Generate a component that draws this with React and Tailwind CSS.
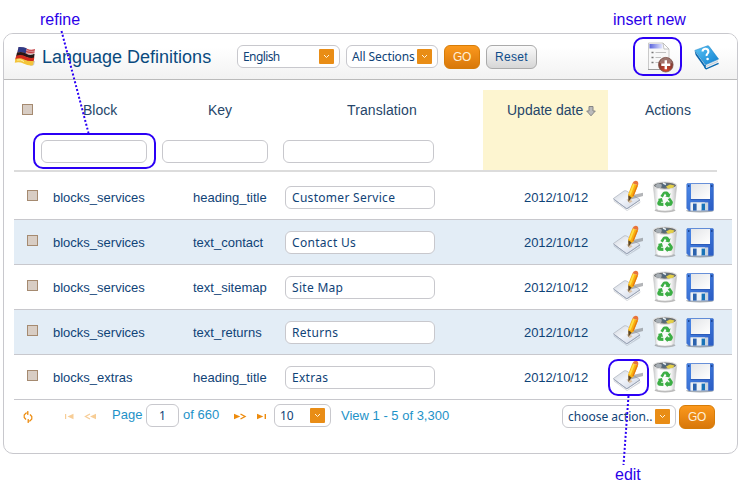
import React from "react";

const rows = [
  ["blocks_services", "heading_title", "Customer Service"],
  ["blocks_services", "text_contact", "Contact Us"],
  ["blocks_services", "text_sitemap", "Site Map"],
  ["blocks_services", "text_returns", "Returns"],
  ["blocks_extras", "heading_title", "Extras"],
];

const field = "h-[23px] shrink-0 rounded-[6px] border border-[#c8c8cd] bg-white";
const inputText = "font-['Noto_Sans',sans-serif] text-[12px] text-[#0f4377]";

function Gradients() {
  return (
    <svg width="0" height="0" className="absolute">
      <defs>
        <linearGradient id="plate" x1="0" y1="0" x2="1" y2="1">
          <stop offset="0" stopColor="#d0d4da" />
          <stop offset=".45" stopColor="#f1f4fa" />
          <stop offset="1" stopColor="#cbd3e2" />
        </linearGradient>
        <linearGradient id="bin" x1="0" y1="0" x2="1" y2="0">
          <stop offset="0" stopColor="#c6c8c9" />
          <stop offset=".22" stopColor="#ffffff" />
          <stop offset=".75" stopColor="#f6f6f6" />
          <stop offset="1" stopColor="#bdbebf" />
        </linearGradient>
        <linearGradient id="disk" x1="0" y1="0" x2="1" y2="1">
          <stop offset="0" stopColor="#4b89e8" />
          <stop offset="1" stopColor="#2a5cc4" />
        </linearGradient>
        <linearGradient id="label" x1="0" y1="0" x2="1" y2="1">
          <stop offset="0" stopColor="#e3e5e8" />
          <stop offset="1" stopColor="#ffffff" />
        </linearGradient>
        <linearGradient id="strip" x1="0" y1="0" x2="1" y2="0">
          <stop offset="0" stopColor="#5a64dc" />
          <stop offset="1" stopColor="#e4e7ff" />
        </linearGradient>
        <radialGradient id="plus" cx=".5" cy=".85" r=".75">
          <stop offset="0" stopColor="#d8442c" />
          <stop offset=".6" stopColor="#8f3a2f" />
          <stop offset="1" stopColor="#7a4a42" />
        </radialGradient>
        <linearGradient id="book" x1="0" y1="0" x2="1" y2="1">
          <stop offset="0" stopColor="#5cc4f5" />
          <stop offset="1" stopColor="#0f80d0" />
        </linearGradient>
      </defs>
    </svg>
  );
}

function EditIcon() {
  return (
    <svg width="34" height="32" viewBox="0 0 34 32" className="shrink-0">
      <path d="M1.5 20 L15 30.2 L28.5 21 L28 23 L15 31 L2 21.5Z" fill="#8c93a0" opacity=".4" />
      <path d="M1.3 18.6 L12 11 Q13.2 10.4 14.5 11 L28 19.6 L16 28.3 Q14.8 29 13.6 28.2 Z" fill="url(#plate)" stroke="#b3b9c4" strokeWidth=".8" />
      <path d="M1.6 19.2 L14.8 28.8 L28 20" fill="none" stroke="#98a2b5" strokeWidth="1" />
      <path d="M17 20 L23 14.5 L31 12.8 L31 16 L24 18Z" fill="#808389" opacity=".6" />
      <path d="M14.5 19.5 Q18 18 20.5 21.5 L17.5 23.2Z" fill="#d9b58a" opacity=".7" />
      <path d="M20.4 3.2 L26 5.2 L21.5 16.4 L17 20 L16.2 14.2Z" fill="#f9b010" />
      <path d="M22 3.8 L17.8 14.6" fill="none" stroke="#ffdf45" strokeWidth="1.8" />
      <path d="M25.3 5.2 L21 16" stroke="#e57a10" strokeWidth="1.4" />
      <path d="M20.4 3.2 Q22 -.2 25 1 Q27 2.4 26 5.2Z" fill="#e8743a" />
      <path d="M16.3 15.2 L19.6 17.6 L16.4 22Z" fill="#5a4526" />
    </svg>
  );
}

function BinIcon() {
  return (
    <svg width="26" height="32" viewBox="0 0 26 32" className="shrink-0">
      <ellipse cx="13" cy="29.2" rx="10.5" ry="2.2" fill="#777" opacity=".5" />
      <path d="M1.2 4.5 L3.8 27.5 Q5 30 13 30 Q21 30 22.2 27.5 L24.8 4.5Z" fill="url(#bin)" stroke="#c0c0c0" strokeWidth=".5" />
      <ellipse cx="13" cy="4.6" rx="11.6" ry="3.6" fill="#6a6e71" stroke="#dedede" strokeWidth="1.1" />
      <path d="M3 4.8 L6 2.2 L10 3.6 L9 7.3 L5 6.6Z" fill="#a7aeb4" />
      <path d="M9.5 3 L15 2 L16 5 L11 7.2Z" fill="#53697b" />
      <path d="M14 5.5 L18 3.5 L22.5 4.5 L21 6.7 L16 7.8Z" fill="#e3cf48" />
      <path d="M11 2 L14 3.5" stroke="#e8edf0" strokeWidth="1.4" />
      <g fill="#3cae45">
        <path d="M8.4 15 L11 11.2 Q11.6 10.4 12.8 10.4 L15 10.4 Q16 10.6 16.6 11.7 L17.4 13 L18.6 12.3 L17.4 16.6 L13.2 15.5 L14.4 14.8 L13 12.4 L10.8 16.4Z" />
        <path d="M18.1 16.8 L20.7 20.6 Q21.2 21.9 20.4 23 L19.3 24.7 L15.6 25 L15.6 26.3 L12.6 23.1 L15.6 19.8 L15.6 21.3 L18 21.2 L15.8 18.2Z" />
        <path d="M11.4 25 L7.2 24.8 Q5.8 24.4 5.3 23 Q5 22 5.6 21 L6.8 18.8 L5.7 18.1 L9.9 17 L11.1 21.1 L9.8 20.4 L8.9 21.8 L11.4 21.8Z" />
      </g>
    </svg>
  );
}

function DiskIcon() {
  return (
    <svg width="29" height="30" viewBox="0 0 29 30" className="shrink-0">
      <ellipse cx="14" cy="27.8" rx="14" ry="1.6" fill="#55606c" opacity=".5" />
      <path d="M1.5 .6 H26.5 Q27.4 .6 27.4 1.6 V26.8 Q27.4 27.6 26.5 27.6 H3 L.8 25.5 V1.6 Q.8 .6 1.5 .6Z" fill="url(#disk)" stroke="#3768c4" strokeWidth=".6" />
      <rect x="5" y="1" width="19" height="15" fill="url(#label)" />
      <path d="M4.5 16.5 H24.5" stroke="#2c5cba" strokeWidth="1" />
      <rect x="4.6" y="19.4" width="17.6" height="8.2" fill="#ccd5de" />
      <path d="M4.6 19.4 H19 L15 27.6 H4.6Z" fill="#edf1f4" />
      <rect x="7" y="20.6" width="3.6" height="7" fill="#2a62ae" />
      <rect x="15.6" y="20.6" width="3.4" height="6.6" fill="#1873b8" />
      <rect x="2" y="2" width="1.5" height="2" fill="#1f4796" />
      <rect x="25" y="2" width="1.5" height="2" fill="#1f4796" />
    </svg>
  );
}

function FlagIcon() {
  return (
    <svg width="23" height="22" viewBox="0 0 23 22" className="shrink-0">
      <path d="M3 15 Q10 14 17 20 L20 19 L21 15Z" fill="#777" opacity=".35" />
      <path d="M4.5 1 Q11 .5 15 3.5 Q18 4.5 21 3.3 L20 8 L2.8 8Z" fill="#dfa3a4" />
      <path d="M13 3.4 Q17 5 21 3.8 M12 5.6 Q16 7 20.6 6" stroke="#c43a40" strokeWidth="1.1" fill="none" />
      <path d="M4.5 1 Q9 .7 12.7 2.3 L11.7 7.5 Q7 5 3.4 6.6Z" fill="#2f3a86" />
      <path d="M3 6.6 Q8 4.8 12 7.5 Q16 9.8 20.6 7.7 L20 12.2 Q15 12.5 11 10.7 Q6 8.7 2 10.8Z" fill="#261616" />
      <path d="M2.2 9.8 Q7 8 11.5 10.5 Q16 12.6 20.3 11.5 L19.7 15.6 Q14 16 10 14 Q5 12 1 13.8Z" fill="#cf2a1c" />
      <path d="M1.3 13 Q6 11.4 10 13.4 Q15 15.8 19.8 14.8 L19 19.3 Q14 20 10 17.7 Q5 15.4 .8 16.8Z" fill="#f3c43a" />
      <path d="M3 14 Q7 13 10 15.5" stroke="#fff3a5" strokeWidth="1" fill="none" />
    </svg>
  );
}

function InsertIcon() {
  return (
    <svg width="28" height="31" viewBox="0 0 28 31">
      <path d="M1.5 1 H16 L22 7 V27.5 H1.5Z" fill="#f8f8f8" stroke="#cacaca" />
      <path d="M1 27.5 H22" stroke="#9a9a9a" strokeWidth="1.2" />
      <rect x="2.5" y="2" width="13" height="4.5" fill="url(#strip)" />
      <path d="M16 1 L17 7 L22 7Z" fill="#fff" stroke="#b5b5b5" strokeWidth=".8" />
      <path d="M4.5 10.5 H6.5 M4.5 15.5 H6.5 M4.5 20.5 H6.5" stroke="#777" strokeWidth="1.5" />
      <path d="M8.5 10.5 H19 M8.5 15.5 H14 M8.5 20.5 H12" stroke="#c0c0c0" strokeWidth="1.2" />
      <circle cx="18.8" cy="22.7" r="7.3" fill="url(#plus)" stroke="#7d5048" strokeWidth=".8" />
      <path d="M12.5 21 Q14 16 18.8 15.8 Q24 16 25.2 21 Q19 23 12.5 21Z" fill="#fff" opacity=".25" />
      <path d="M18.8 18.2 V27.2 M14.3 22.7 H23.3" stroke="#fff" strokeWidth="2.4" />
    </svg>
  );
}

function HelpBook() {
  return (
    <svg width="26" height="25" viewBox="0 0 26 25" className="shrink-0">
      <path d="M.6 5.8 L11 20.3 L11.6 24 L1.6 10Z" fill="#0a66ad" />
      <path d="M11.5 20 L24.2 14.5 L23.9 18.2 L12.5 23.2Z" fill="#e9edf1" />
      <path d="M12 21.5 L24 16.3" stroke="#abb8c5" strokeWidth=".6" />
      <path d="M.8 5.4 L13.5 .8 Q14.5 .6 15.2 1.5 L24.6 14.1 L11.5 19.8Z" fill="url(#book)" stroke="#0f7cc4" strokeWidth=".5" />
      <path d="M11.3 20 Q10.2 23 12.3 23.9 L24.6 18.3" fill="none" stroke="#0a6ab0" strokeWidth="1.3" />
      <path d="M8.6 6.6 Q8.6 4.2 11.1 3.8 Q13.9 3.6 14.4 6.2 Q14.6 8 13.2 9 Q12.4 9.7 12.7 11" fill="none" stroke="#fff" strokeWidth="2.1" />
      <circle cx="13.6" cy="14" r="1.3" fill="#fff" />
    </svg>
  );
}

function Check() {
  return <span className="block size-[11px] shrink-0 border border-[#a58a70] bg-[#d8cdc4]" />;
}

function Select({ width, children, track = "" }) {
  return (
    <div className={`flex items-center justify-between pr-[5px] pl-[5px] ${field} ${width}`}>
      <span className={`whitespace-pre ${inputText} ${track}`}>{children}</span>
      <span className="flex size-[15px] shrink-0 items-center justify-center rounded-[1px] bg-[#e98d16]">
        <svg width="7" height="5" viewBox="0 0 7 5">
          <path d="M1 1 L3.5 3.5 L6 1" fill="none" stroke="#fff3dc" strokeWidth="1" />
        </svg>
      </span>
    </div>
  );
}

function Go() {
  return (
    <button className="h-[24px] w-[36px] shrink-0 rounded-[6px] border border-[#d67c08] bg-linear-to-b from-[#fb981c] to-[#d8780a] text-[12px] leading-[22px] tracking-[-0.4px] text-[#fff0d8]">
      GO
    </button>
  );
}

function Highlight({ place }) {
  return <div className={`pointer-events-none absolute rounded-[10px] border-2 border-[#2b00f5] ${place}`} />;
}

function Note({ place, children }) {
  return <div className={`absolute whitespace-nowrap text-[16px] leading-[18px] text-[#2b00e8] ${place}`}>{children}</div>;
}

export default function App() {
  return (
    <div className="relative h-[484px] w-[740px] overflow-hidden bg-white pt-[33px] pl-[3px] font-['Liberation_Sans',Arial,sans-serif]">
      <Gradients />
      <main className="h-[421px] w-[735px] overflow-hidden rounded-[10px] border border-[#c8c8cd] bg-white">
        <header className="flex h-[46px] items-start border-b border-[#bbb] bg-linear-to-b from-white from-30% to-[#f2f2f2] pl-[10px]">
          <div className="mt-[12px]"><FlagIcon /></div>
          <h1 className="mt-[12px] ml-[5px] w-[195px] text-[18px] leading-[22px] whitespace-nowrap text-[#0a4a7e]">Language Definitions</h1>
          <div className="mt-[11px] flex items-start gap-[6px]">
            <Select width="w-[103px]" track="tracking-[-0.6px]">English</Select>
            <Select width="w-[92px]" track="tracking-[-0.1px]">All Sections</Select>
            <Go />
            <button className="h-[24px] w-[51px] rounded-[6px] border border-[#aaa] bg-linear-to-b from-[#fafafa] to-[#d6d6d6] text-[12px] leading-[22px] tracking-[0.3px] text-[#0f4c8a]">Reset</button>
          </div>
          <div className="mt-[8px] ml-[110px]"><InsertIcon /></div>
          <div className="mt-[11px] ml-[19px]"><HelpBook /></div>
        </header>

        <section className="pt-[10px] pl-[10px]">
          <div className="flex h-[82px] w-[703px] border-b-2 border-[#dcdcdc] text-[14px] leading-[16px] text-[#26466a]">
            <div className="w-[148px]">
              <div className="flex h-[50px] items-start pt-[12px] pl-[8px]">
                <div className="mt-[2px] mr-[50px]"><Check /></div>
                Block
              </div>
              <input className={`block ml-[27px] w-[106px] ${field}`} />
            </div>
            <div className="w-[121px]">
              <div className="h-[50px] pt-[12px] pl-[46px]">Key</div>
              <input className={`block w-[106px] ${field}`} />
            </div>
            <div className="w-[200px]">
              <div className="h-[50px] pt-[12px] pl-[64px] tracking-[0.1px]">Translation</div>
              <input className={`block w-[151px] ${field}`} />
            </div>
            <div className="flex h-[80px] w-[125px] items-start bg-[#fdf5d0] pt-[12px] pl-[24px]">
              <span className="w-[79px] whitespace-nowrap">Update date</span>
              <svg width="10" height="11" viewBox="0 0 10 11" className="mt-[4px]">
                <path d="M3 .5 H7 V5 H9.3 L5 9.8 L.7 5 H3Z" fill="#bbb" stroke="#858585" />
              </svg>
            </div>
            <div className="pt-[12px] pl-[37px]">Actions</div>
          </div>

          <div className="pt-[3px]">
            {rows.map(([block, key, value], i) => (
              <div key={i} className={`flex h-[45px] w-[718px] items-center border-b border-[#c8c8cd] text-[13px] text-[#0f4377] ${i % 2 ? "bg-[#e3edf6]" : ""}`}>
                <div className="-mt-[3px] w-[39px] pl-[13px]"><Check /></div>
                <div className="w-[140px] pt-[2px]">{block}</div>
                <div className="w-[92px] pt-[2px]">{key}</div>
                <div className={`mt-px flex w-[150px] items-center pl-[6px] tracking-[0.3px] ${field} ${inputText}`}>{value}</div>
                <div className="w-[89px] shrink-0" />
                <div className="w-[88px] pt-[2px] tracking-[-0.1px]">2012/10/12</div>
                <div className="-mt-[2px] flex items-start">
                  <EditIcon />
                  <div className="ml-[6px] mt-px"><BinIcon /></div>
                  <div className="ml-[8px] mt-[3px]"><DiskIcon /></div>
                </div>
              </div>
            ))}
          </div>

          <footer className="flex items-start pt-[4px] text-[13px] leading-[22px] whitespace-nowrap text-[#1e92c8]">
            <svg width="10" height="12" viewBox="0 0 10 12" className="mt-[7px] ml-[9px] shrink-0" fill="none" stroke="#ed8b0d" strokeWidth="1.2">
              <path d="M5.5 2 H3 L1.2 4 V6.5 L3 8.5 M4.8 0 V4 M4.5 10 H7 L8.8 8 V5.5 L7 3.5 M5.2 8 V12" />
            </svg>
            <svg width="33" height="7" viewBox="0 0 33 7" className="mt-[9px] ml-[31px] shrink-0" fill="#f7cd96">
              <path d="M1 1 H2.2 V6 H1Z M9.5 .8 V6.2 L3.5 3.5Z M32 .8 V6.2 L26 3.5Z" />
              <path d="M26 1 L21.5 3.5 L26 6" fill="none" stroke="#f7cd96" strokeWidth="1.3" />
            </svg>
            <span className="ml-[15px] w-[34px]">Page</span>
            <div className={`flex w-[33px] items-center justify-center ${field} ${inputText}`}>1</div>
            <span className="ml-[4px] w-[51px]">of 660</span>
            <svg width="35" height="7" viewBox="0 0 35 7" className="mt-[9px] shrink-0" fill="#ed8b0d">
              <path d="M0 .7 V6.3 L6.3 3.5Z M23 .7 V6.3 L29.3 3.5Z M30.6 1 H32 V6 H30.6Z" />
              <path d="M6.5 1 L11 3.5 L6.5 6" fill="none" stroke="#ed8b0d" strokeWidth="1.4" />
            </svg>
            <div className="ml-[5px]"><Select width="w-[57px]">10</Select></div>
            <span className="mt-px ml-[10px] w-[221px]">View 1 - 5 of 3,300</span>
            <div className="mt-px flex items-start gap-[3px]">
              <Select width="w-[114px]">choose action..</Select>
              <Go />
            </div>
          </footer>
        </section>
      </main>

      <Note place="left-[40px] top-[11px]">refine</Note>
      <Note place="left-[613px] top-[11px]">insert new</Note>
      <Note place="left-[615px] top-[466px]">edit</Note>
      <Highlight place="left-[33px] top-[133px] h-[36px] w-[123px]" />
      <Highlight place="left-[633px] top-[37px] h-[39px] w-[49px]" />
      <Highlight place="left-[608px] top-[359px] h-[37px] w-[41px]" />
      <svg width="740" height="484" className="pointer-events-none absolute top-0 left-0" stroke="#2b00f5" strokeWidth="2" strokeDasharray="2 2">
        <path d="M61.5 31 L88.5 133 M628.5 396 L623.5 465" />
      </svg>
    </div>
  );
}
